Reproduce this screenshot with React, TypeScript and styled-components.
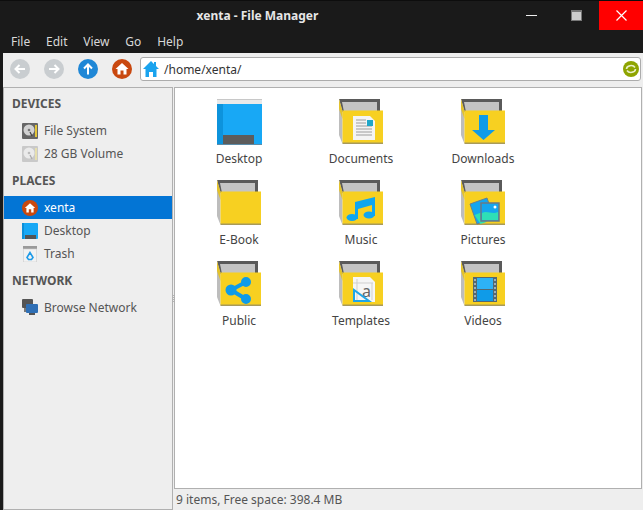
import React from 'react';
import styled, { createGlobalStyle } from 'styled-components';

const GlobalStyle = createGlobalStyle`
	html, body {
		margin: 0;
		padding: 0;
		overflow: hidden;
		background: #111;
	}
	* {
		box-sizing: border-box;
	}
`;

const Window = styled.div`
	width: 643px;
	height: 510px;
	display: flex;
	flex-direction: column;
	font-family: 'Noto Sans', 'Open Sans', sans-serif;
	font-size: 12px;
	background: #1a1a1a;
	overflow: hidden;
`;

const TitleBar = styled.header`
	height: 30px;
	flex: none;
	display: flex;
	border-top: 1px solid #0d0d0d;
`;

const Title = styled.div`
	flex: 1;
	padding-left: 6px;
	text-align: center;
	line-height: 29px;
	font-weight: 700;
	font-size: 12px;
	color: #e6e6e6;
`;

const WindowButtons = styled.div`
	display: flex;
	align-items: center;
`;

const WinButton = styled.div<{ $danger?: boolean }>`
	width: ${({ $danger }) => ($danger ? 44 : 45)}px;
	height: 29px;
	display: flex;
	align-items: center;
	justify-content: center;
	background: ${({ $danger }) => ($danger ? '#ff0000' : 'transparent')};
`;

const MenuBar = styled.nav`
	height: 23px;
	flex: none;
	display: flex;
	align-items: center;
	gap: 15.8px;
	padding-left: 11px;
	color: #d8d8d8;
`;

const Content = styled.div`
	flex: 1;
	display: flex;
	flex-direction: column;
	margin-left: 3px;
	background: #eeeeee;
	min-height: 0;
`;

const Toolbar = styled.div`
	height: 34px;
	flex: none;
	display: flex;
	align-items: center;
	gap: 14px;
	padding: 0 2px 2px 7px;
`;

const ToolButton = styled.div`
	width: 20px;
	height: 20px;
	flex: none;
`;

const PathBar = styled.div`
	flex: 1;
	height: 24px;
	margin-left: -6px;
	display: flex;
	align-items: center;
	gap: 5px;
	padding: 0 1px 0 2px;
	background: #fff;
	border: 1px solid #acacac;
	border-radius: 3px;
	color: #333;
	font-size: 12px;
`;

const PathText = styled.span`
	flex: 1;
`;

const Panes = styled.div`
	flex: 1;
	display: flex;
	min-height: 0;
`;

const Sidebar = styled.aside`
	width: 170px;
	flex: none;
	background: #eeeeee;
	border: 1px solid #b0b0b0;
	color: #555;
`;

const SectionHeading = styled.div`
	height: 31px;
	padding-left: 8px;
	line-height: 31px;
	font-weight: 700;
	color: #555;
`;

const SideRow = styled.div<{ $active?: boolean }>`
	height: 23px;
	display: flex;
	align-items: center;
	gap: 6px;
	padding-left: 18px;
	background: ${({ $active }) => ($active ? '#0375d5' : 'transparent')};
	color: ${({ $active }) => ($active ? '#fff' : '#555')};
`;

const Splitter = styled.div`
	width: 1px;
	flex: none;
	display: flex;
	align-items: center;
`;

const Grip = styled.div`
	width: 1px;
	height: 7px;
	background: repeating-linear-gradient(#b4b4b4 0 1px, transparent 1px 2px);
`;

const MainColumn = styled.div`
	flex: 1;
	display: flex;
	flex-direction: column;
	min-width: 0;
	padding-right: 1px;
`;

const FilePane = styled.main`
	flex: 1;
	background: #fff;
	border: 1px solid #b0b0b0;
	padding: 3px 0 0 3px;
	display: grid;
	grid-template-columns: repeat(3, 122px);
	grid-auto-rows: 81px;
	align-content: start;
`;

const FileCell = styled.div`
	display: flex;
	flex-direction: column;
	align-items: center;
	padding-top: 8px;
`;

const FileIcon = styled.div`
	height: 46px;
	flex: none;
	margin-bottom: 5px;
`;

const FileLabel = styled.div`
	line-height: 17px;
	color: #444;
`;

const StatusBar = styled.footer`
	height: 21px;
	flex: none;
	line-height: 21px;
	padding-left: 2px;
	color: #555;
`;

const CircleIcon = ({ fill, children }: { fill: string; children: React.ReactNode }) => (
	<svg width="20" height="20" viewBox="0 0 20 20">
		<circle cx="10" cy="10" r="10" fill={fill} />
		{children}
	</svg>
);

const ArrowLeft = () => (
	<path d="M15 10H6M9.5 6 5.5 10l4 4" fill="none" stroke="#fff" strokeWidth="2" />
);
const ArrowRight = () => (
	<path d="M5 10h9M10.5 6l4 4-4 4" fill="none" stroke="#fff" strokeWidth="2" />
);
const ArrowUp = () => (
	<path d="M10 15.5V6M6 9.5l4-4 4 4" fill="none" stroke="#fff" strokeWidth="2" />
);
const HomeShape = () => (
	<path d="M10 4 3.5 10H5.500v5.500h3v-4h3v4h3V10h2z" fill="#fff" />
);

const DriveIcon = ({ light }: { light?: boolean }) => (
	<svg width="16" height="16" viewBox="0 0 16 16">
		<rect x="0" y="0" width="16" height="16" rx="1" fill={light ? '#c9c9c9' : '#666'} />
		<rect x="13" y="2" width="2" height="12" fill={light ? '#e6dfae' : '#e3c63a'} />
		<circle cx="7" cy="7" r="5.500" fill={light ? '#eaeaea' : '#d2d2d2'} />
		<circle cx="7" cy="7" r="1.300" fill={light ? '#bbb' : '#777'} />
		<path d="M8 9l2 4" stroke={light ? '#aaa' : '#444'} strokeWidth="1.200" />
	</svg>
);

const SmallDesktop = () => (
	<svg width="16" height="16" viewBox="0 0 16 16">
		<rect width="16" height="16" rx="1" fill="#18a8f5" />
		<rect width="2" height="16" fill="#0d8fd8" />
		<rect x="3" y="12" width="11" height="4" fill="#555" />
	</svg>
);

const SmallTrash = () => (
	<svg width="16" height="16" viewBox="0 0 16 16">
		<rect x="1" y="0" width="14" height="3" fill="#9a9a9a" />
		<rect x="1.300" y="3" width="13.400" height="13" fill="#f2f2f2" stroke="#ccc" strokeWidth="0.600" />
		<path d="M8 6.500 5 11.500 6.500 13.500h3L11 11.500z" fill="none" stroke="#1f9be8" strokeWidth="1.600" />
	</svg>
);

const SmallNetwork = () => (
	<svg width="16" height="17" viewBox="0 0 16 17">
		<rect x="0" y="0" width="11" height="9" rx="1" fill="#555" />
		<rect x="2" y="9" width="5" height="4" fill="#777" />
		<rect x="4" y="5" width="12" height="9" rx="1" fill="#2f6fb5" />
		<rect x="7" y="14" width="6" height="2" fill="#555" />
	</svg>
);

const FolderBase = ({ children }: { children?: React.ReactNode }) => (
	<svg width="44" height="46" viewBox="0 0 44 46">
		<path d="M0 0h41v13H3z" fill="#5a5a5a" />
		<path d="M3 3h35v10H5z" fill="#c4c4c4" />
		<path d="M0 0l3.500 12V45L0 36z" fill="#bdbdbd" />
		<path d="M0 0l3.500 12V20L0 10z" fill="#e3c22c" />
		<rect x="3.500" y="11.500" width="40.500" height="32.500" fill="#f7d021" />
		<rect x="3.500" y="43.500" width="40.500" height="1.500" fill="#a89a5a" />
		{children}
	</svg>
);

const DesktopBig = () => (
	<svg width="45" height="46" viewBox="0 0 45 46">
		<rect width="45" height="46" fill="#18a8f5" />
		<rect width="45" height="5" fill="#e9e9e9" />
		<rect width="45" height="1" fill="#c8c8c8" />
		<rect y="5" width="6" height="41" fill="#0d93dc" />
		<rect x="6" y="36" width="31" height="10" fill="#5c5c5c" />
		<rect y="45" width="45" height="1" fill="#5d8ca8" />
	</svg>
);

const DocGlyph = () => (
	<g>
		<path d="M14 17h17l5 5v19H14z" fill="#f4f4f4" />
		<path d="M17 21h10M17 24h10M17 27h16M17 30h16M17 33h16M17 36h16" stroke="#9c9c9c" strokeWidth="1" />
		<rect x="28" y="21" width="6" height="6" fill="#1fa6c8" />
	</g>
);

const DownloadGlyph = () => <path d="M18 16h9v15h7L22.500 41 11 31h7z" fill="#0f9be8" />;

const MusicGlyph = () => (
	<g fill="#0fa6f0">
		<path d="M16 22l20-5v19h-3V25l-14 4v10h-3z" />
		<ellipse cx="13" cy="37.500" rx="5.500" ry="3.500" />
		<ellipse cx="30" cy="35" rx="5.500" ry="3.500" />
	</g>
);

const PicturesGlyph = () => (
	<g>
		<path d="M9 24l17-6 7 20-17 6z" fill="#14a6ef" stroke="#6b7f8c" strokeWidth="1" />
		<path d="M13.500 35l8-3 4 10-6 2z" fill="#2ee0b6" />
		<rect x="20" y="23" width="18" height="18" fill="#14a6ef" stroke="#6a7a84" strokeWidth="1.500" />
		<path d="M21 33c5-3 10 2 16-1v8H21z" fill="#2ee0b6" />
		<circle cx="34" cy="27" r="1.500" fill="#fff" />
	</g>
);

const ShareGlyph = () => (
	<g stroke="#0f9be8" strokeWidth="4" fill="#0f9be8">
		<path d="M29 21 14 29l15 9" fill="none" />
		<circle cx="29" cy="21" r="3" />
		<circle cx="14" cy="29" r="3.500" />
		<circle cx="29" cy="38" r="3" />
	</g>
);

const TemplateGlyph = () => (
	<g>
		<path d="M14 16h17l5 5v20H14z" fill="#f6f6f6" />
		<path d="M18 18v22M14 22h20M33 22v17" stroke="#cfcfcf" strokeWidth="1" />
		<text x="23" y="36" fontSize="16" fontFamily="Noto Sans, sans-serif" fill="#666">a</text>
		<path d="M15 29v11h15z" fill="none" stroke="#1fa6e8" strokeWidth="2" />
	</g>
);

const VideoGlyph = () => (
	<g>
		<rect x="12" y="16" width="24" height="25" fill="#556870" />
		<rect x="16" y="17" width="16" height="11" fill="#2db2f6" />
		<rect x="16" y="29" width="16" height="11" fill="#0f9be8" />
		<path d="M14 18v22M34 18v22" stroke="#9fb0b8" strokeWidth="2" strokeDasharray="2 2" />
	</g>
);

const FILES = [
	{ id: 'desktop', label: 'Desktop', icon: <DesktopBig /> },
	{ id: 'documents', label: 'Documents', icon: <FolderBase><DocGlyph /></FolderBase> },
	{ id: 'downloads', label: 'Downloads', icon: <FolderBase><DownloadGlyph /></FolderBase> },
	{ id: 'ebook', label: 'E-Book', icon: <FolderBase /> },
	{ id: 'music', label: 'Music', icon: <FolderBase><MusicGlyph /></FolderBase> },
	{ id: 'pictures', label: 'Pictures', icon: <FolderBase><PicturesGlyph /></FolderBase> },
	{ id: 'public', label: 'Public', icon: <FolderBase><ShareGlyph /></FolderBase> },
	{ id: 'templates', label: 'Templates', icon: <FolderBase><TemplateGlyph /></FolderBase> },
	{ id: 'videos', label: 'Videos', icon: <FolderBase><VideoGlyph /></FolderBase> },
];

const MENU = ['File', 'Edit', 'View', 'Go', 'Help'];

const App = () => (
	<Window>
		<GlobalStyle />
		<TitleBar>
			<Title>xenta - File Manager</Title>
			<WindowButtons>
				<WinButton>
					<svg width="11" height="3" viewBox="0 0 11 3"><rect y="1" width="11" height="1" fill="#eee" /></svg>
				</WinButton>
				<WinButton>
					<svg width="11" height="11" viewBox="0 0 11 11">
						<rect width="11" height="11" fill="#777" />
						<rect x="1" y="2" width="9" height="8" fill="#ccc" />
					</svg>
				</WinButton>
				<WinButton $danger>
					<svg width="11" height="11" viewBox="0 0 11 11"><path d="M.5.5l10 10M10.500.5l-10 10" stroke="#fff" strokeWidth="1.200" /></svg>
				</WinButton>
			</WindowButtons>
		</TitleBar>
		<MenuBar>
			{MENU.map((item) => (
				<span key={item}>{item}</span>
			))}
		</MenuBar>
		<Content>
			<Toolbar>
				<ToolButton><CircleIcon fill="#c9cdd0"><ArrowLeft /></CircleIcon></ToolButton>
				<ToolButton><CircleIcon fill="#c9cdd0"><ArrowRight /></CircleIcon></ToolButton>
				<ToolButton><CircleIcon fill="#1f87d6"><ArrowUp /></CircleIcon></ToolButton>
				<ToolButton><CircleIcon fill="#c9480f"><HomeShape /></CircleIcon></ToolButton>
				<PathBar>
					<svg width="16" height="16" viewBox="0 0 16 16">
						<path d="M8 0 11 3V1h2v4l3 3h-2.500v8H10v-5H6v5H2.500V8H0z" fill="#1aa3ee" />
					</svg>
					<PathText>/home/xenta/</PathText>
					<svg width="16" height="16" viewBox="0 0 16 16">
						<circle cx="8" cy="8" r="8" fill="#8ea400" />
						<path d="M3.500 8a4.500 3.500 0 0 1 8.500-1.500M12.500 8a4.500 3.500 0 0 1-8.500 1.500" fill="none" stroke="#e9efc8" strokeWidth="1.600" />
					</svg>
				</PathBar>
			</Toolbar>
			<Panes>
				<Sidebar>
					<SectionHeading>DEVICES</SectionHeading>
					<SideRow><DriveIcon />File System</SideRow>
					<SideRow><DriveIcon light />28 GB Volume</SideRow>
					<SectionHeading>PLACES</SectionHeading>
					<SideRow $active>
						<svg width="16" height="16" viewBox="0 0 20 20">
							<circle cx="10" cy="10" r="10" fill="#c9480f" />
							<HomeShape />
						</svg>
						xenta
					</SideRow>
					<SideRow><SmallDesktop />Desktop</SideRow>
					<SideRow><SmallTrash />Trash</SideRow>
					<SectionHeading>NETWORK</SectionHeading>
					<SideRow><SmallNetwork />Browse Network</SideRow>
				</Sidebar>
				<Splitter><Grip /></Splitter>
				<MainColumn>
					<FilePane>
						{FILES.map((file) => (
							<FileCell key={file.id}>
								<FileIcon>{file.icon}</FileIcon>
								<FileLabel>{file.label}</FileLabel>
							</FileCell>
						))}
					</FilePane>
					<StatusBar>9 items, Free space: 398.4 MB</StatusBar>
				</MainColumn>
			</Panes>
		</Content>
	</Window>
);

export default App;
